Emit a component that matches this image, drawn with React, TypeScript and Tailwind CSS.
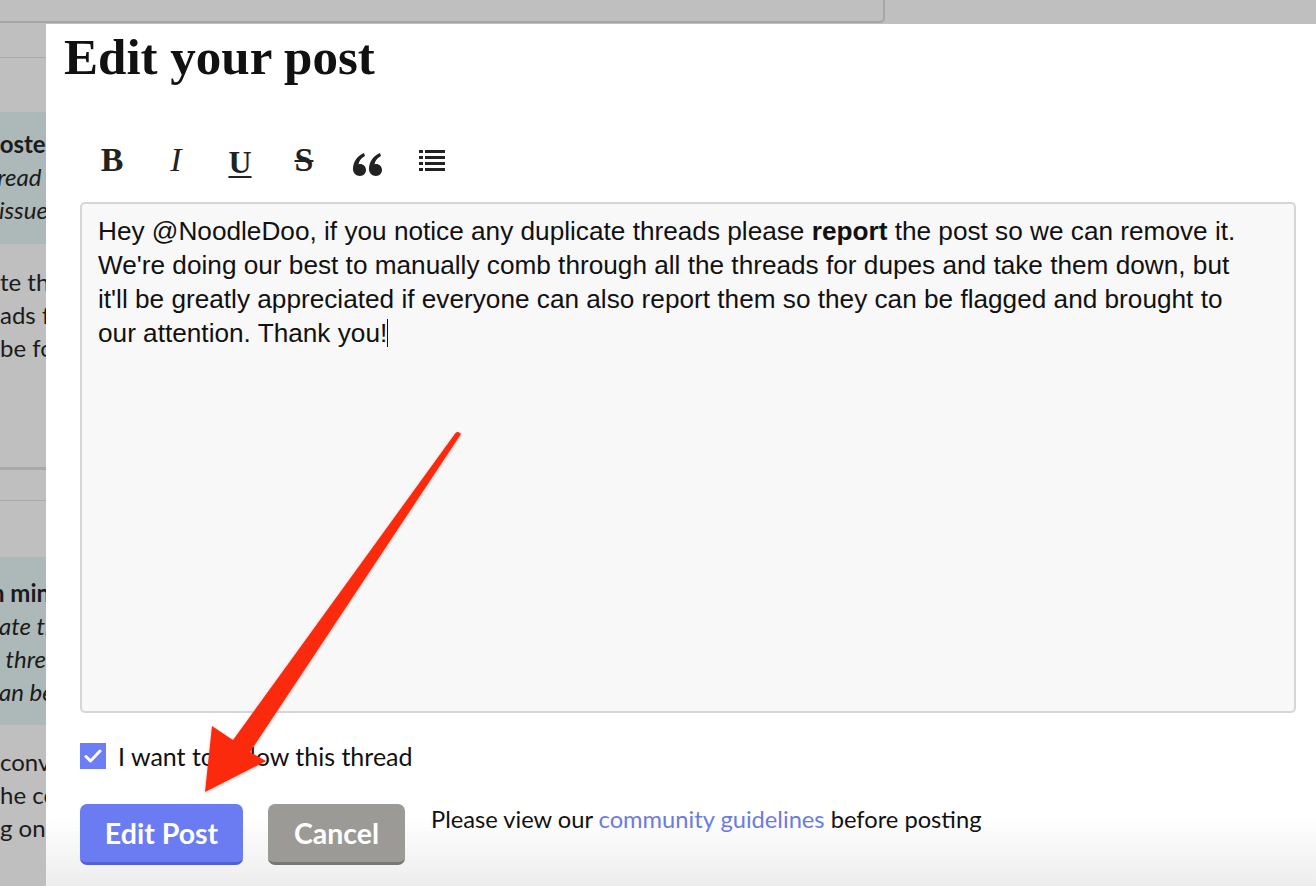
import React from "react";

const sans = { fontFamily: "Lato, 'Noto Sans', sans-serif" };

function BgLine({ children, ml = 0, className = "" }: { children: React.ReactNode; ml?: number; className?: string }) {
  return (
    <div className={"whitespace-nowrap " + className} style={{ marginLeft: ml }}>
      {children}
    </div>
  );
}

function ListIcon() {
  return (
    <svg width="26" height="22" viewBox="0 0 26 22" fill="#222">
      <rect x="0" y="1" width="4" height="3" />
      <rect x="6" y="1" width="20" height="3" />
      <rect x="0" y="7" width="4" height="3" />
      <rect x="6" y="7" width="20" height="3" />
      <rect x="0" y="13" width="4" height="3" />
      <rect x="6" y="13" width="20" height="3" />
      <rect x="0" y="19" width="4" height="3" />
      <rect x="6" y="19" width="20" height="3" />
    </svg>
  );
}

function QuoteIcon() {
  return (
    <svg width="30" height="26" viewBox="0 0 30 26" fill="#222">
      <path d="M7 26c-4 0-7-3-7-7 0-7 4-13 11-16l1 3c-4 2-6 5-6.5 8.5 0.5-0.3 1-0.4 1.5-0.4 3.5 0 6 2.6 6 6s-2.5 5.9-6 5.9z" />
      <path d="M23 26c-4 0-7-3-7-7 0-7 4-13 11-16l1 3c-4 2-6 5-6.5 8.5 0.5-0.3 1-0.4 1.5-0.4 3.5 0 6 2.6 6 6s-2.5 5.9-6 5.9z" />
    </svg>
  );
}

export default function App() {
  const serif = { fontFamily: "'Liberation Serif', 'DejaVu Serif', serif" };
  return (
    <div className="relative w-[1316px] h-[886px] overflow-hidden bg-[#bfbfbf] text-[#1b1b1b]" style={sans}>
      {/* background page */}
      <div className="flex flex-col w-[600px] text-[24px] leading-[33px]">
        <div className="h-[24px] flex">
          <div className="w-[885px] shrink-0 h-[23px] border-b-2 border-r-2 border-[#a6a6a6] rounded-br-[5px]" />
        </div>
        <div className="h-[34px] border-b border-[#a9a9a9]" />
        <div className="h-[54px]" />
        <div className="bg-[#adb9b9] pt-[15px] pb-[18px]">
          <BgLine ml={-14} className="font-bold">posted</BgLine>
          <BgLine ml={-24} className="italic">thread</BgLine>
          <BgLine ml={-1} className="italic">issue</BgLine>
        </div>
        <div className="pt-[21px]">
          <BgLine ml={0}>te the</BgLine>
          <BgLine ml={0}>ads for</BgLine>
          <BgLine ml={0}>be fo</BgLine>
        </div>
        <div className="h-[103px]" />
        <div className="h-[3px] bg-[#a8a8a8]" />
        <div className="h-[31px] border-b border-[#aaaaaa]" />
        <div className="h-[56px]" />
        <div className="bg-[#adb9b9] pt-[19px] pb-[17px]">
          <BgLine ml={-9} className="font-bold">n mini</BgLine>
          <BgLine ml={-1} className="italic">ate th</BgLine>
          <BgLine ml={0} className="italic">&nbsp;thre</BgLine>
          <BgLine ml={-1} className="italic">an be</BgLine>
        </div>
        <div className="pt-[20px]">
          <BgLine ml={0}>conv</BgLine>
          <BgLine ml={0}>he co</BgLine>
          <BgLine ml={0}>g on</BgLine>
        </div>
      </div>

      {/* modal */}
      <div className="absolute left-[46px] top-[24px] right-0 bottom-0 bg-[linear-gradient(to_bottom,#ffffff_0,#ffffff_calc(100%-70px),#ededed_100%)] pl-[34px] pr-[20px]">
        <h1 className="pt-[5px] -ml-[16px] text-[51px] leading-[56px] font-bold text-[#111]" style={serif}>
          Edit your post
        </h1>
        <div className="mt-[55px] flex items-center h-[40px] text-[#222]">
          <div className="w-[64px] flex justify-center">
            <span className="text-[34px] font-bold leading-none" style={serif}>B</span>
          </div>
          <div className="w-[64px] flex justify-center">
            <span className="text-[34px] italic leading-none" style={serif}>I</span>
          </div>
          <div className="w-[64px] flex justify-center pt-[4px]">
            <span className="text-[32px] font-bold leading-none underline decoration-[2px] underline-offset-[3px]" style={serif}>U</span>
          </div>
          <div className="w-[64px] flex justify-center">
            <span className="text-[34px] font-bold leading-none line-through decoration-[2px]" style={serif}>S</span>
          </div>
          <div className="w-[64px] flex justify-center pt-[6px]">
            <QuoteIcon />
          </div>
          <div className="w-[64px] flex justify-center">
            <ListIcon />
          </div>
        </div>
        <div
          className="mt-[22px] h-[511px] border-2 border-[#d6d6d6] rounded-[5px] bg-[#f8f8f8] pl-[16px] pt-[10px] text-[26.2px] leading-[34px] text-[#111] whitespace-nowrap"
          style={{ fontFamily: "'Liberation Sans', Arial, sans-serif" }}
        >
          Hey @NoodleDoo, if you notice any duplicate threads please <b>report</b> the post so we can remove it.
          <br />
          We're doing our best to manually comb through all the threads for dupes and take them down, but
          <br />
          it'll be greatly appreciated if everyone can also report them so they can be flagged and brought to
          <br />
          our attention. Thank you!<span className="inline-block w-[1px] h-[28px] bg-[#111] align-middle -mt-[4px]" />
        </div>
        <div className="mt-[30px] flex items-center h-[26px]">
          <div className="w-[26px] h-[26px] bg-[#6b7ef5] flex items-center justify-center">
            <svg width="18" height="14" viewBox="0 0 18 14">
              <path d="M2 7.5l4.5 4.5L16 2" fill="none" stroke="#fff" strokeWidth="3" strokeLinecap="round" strokeLinejoin="round" />
            </svg>
          </div>
          <span className="ml-[12px] text-[25px] leading-[30px] text-[#111]">I want to follow this thread</span>
        </div>
        <div className="mt-[35px] flex items-start">
          <button className="w-[163px] h-[61px] rounded-[7px] bg-[#6b7cf3] border-b-[3px] border-[#4f60d8] text-white text-[28.5px] font-bold">
            Edit Post
          </button>
          <button className="ml-[25px] w-[137px] h-[61px] rounded-[7px] bg-[#9b9a97] border-b-[3px] border-[#787774] text-white text-[28.5px] font-bold">
            Cancel
          </button>
          <p className="ml-[26px] mt-[1px] text-[23.7px] leading-[28px] text-[#111]">
            Please view our <span className="text-[#6b7be3]">community guidelines</span> before posting
          </p>
        </div>
      </div>

      {/* red annotation arrow */}
      <svg className="absolute left-0 top-0 pointer-events-none" width="1316" height="886">
        <defs>
          <filter id="sh" x="-10%" y="-10%" width="120%" height="120%">
            <feDropShadow dx="0" dy="1" stdDeviation="1.5" floodColor="#000" floodOpacity="0.25" />
          </filter>
        </defs>
        <path
          d="M455.5 433 Q458 430.5 461 434 L250 752 L266 761 L205 792 L212 726 L233 740 Z"
          fill="#fc2a0d"
          filter="url(#sh)"
        />
      </svg>
    </div>
  );
}
